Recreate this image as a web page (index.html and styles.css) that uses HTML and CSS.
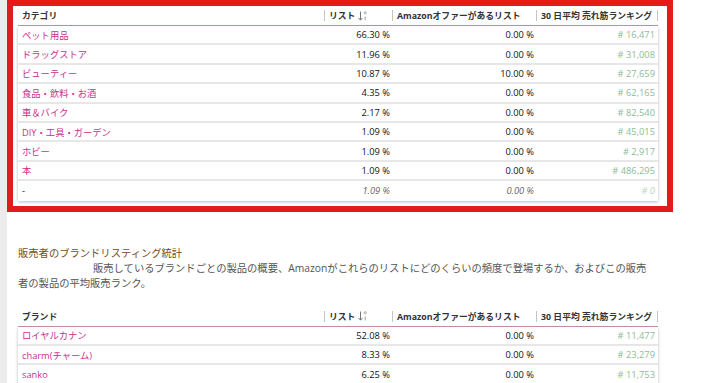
FILE: index.html
```html
<!DOCTYPE html>
<html lang="ja">
<head>
<meta charset="utf-8">
<title>カテゴリ統計</title>
<link rel="stylesheet" href="styles.css">
</head>
<body>
<div class="page">
  <div class="rail"></div>
  <main class="content">
    <div class="highlight">
      <div class="stats">
        <div class="head">
          <div class="th"><span class="label">カテゴリ</span><span class="grip"></span></div>
          <div class="th"><span class="label">リスト <svg class="sort" viewBox="0 0 9 10" width="9" height="10"><path d="M2.5 0.5V9M0.6 7l1.9 2.2L4.4 7" fill="none" stroke="#777" stroke-width="1"/><circle cx="7.2" cy="1.8" r="1.1" fill="none" stroke="#999" stroke-width="0.8"/><path d="M7.2 5.6V9.4" stroke="#999" stroke-width="0.9"/></svg></span><span class="grip"></span></div>
          <div class="th"><span class="label">Amazonオファーがあるリスト</span><span class="grip"></span></div>
          <div class="th"><span class="label">30 日平均 売れ筋ランキング</span><span class="grip"></span></div>
        </div>
        <div class="body">
          <div class="row"><div class="cell cat">ペット用品</div><div class="cell num">66.30 %</div><div class="cell num">0.00 %</div><div class="cell rank"># 16,471</div></div>
          <div class="row"><div class="cell cat">ドラッグストア</div><div class="cell num">11.96 %</div><div class="cell num">0.00 %</div><div class="cell rank"># 31,008</div></div>
          <div class="row"><div class="cell cat">ビューティー</div><div class="cell num">10.87 %</div><div class="cell num">10.00 %</div><div class="cell rank"># 27,659</div></div>
          <div class="row"><div class="cell cat">食品・飲料・お酒</div><div class="cell num">4.35 %</div><div class="cell num">0.00 %</div><div class="cell rank"># 62,165</div></div>
          <div class="row"><div class="cell cat">車＆バイク</div><div class="cell num">2.17 %</div><div class="cell num">0.00 %</div><div class="cell rank"># 82,540</div></div>
          <div class="row"><div class="cell cat">DIY・工具・ガーデン</div><div class="cell num">1.09 %</div><div class="cell num">0.00 %</div><div class="cell rank"># 45,015</div></div>
          <div class="row"><div class="cell cat">ホビー</div><div class="cell num">1.09 %</div><div class="cell num">0.00 %</div><div class="cell rank"># 2,917</div></div>
          <div class="row"><div class="cell cat">本</div><div class="cell num">1.09 %</div><div class="cell num">0.00 %</div><div class="cell rank"># 486,295</div></div>
          <div class="row total"><div class="cell plain">-</div><div class="cell num">1.09 %</div><div class="cell num">0.00 %</div><div class="cell rank"># 0</div></div>
        </div>
      </div>
    </div>

    <section class="brands">
      <h2 class="title">販売者のブランドリスティング統計</h2>
      <p class="desc">販売しているブランドごとの製品の概要、Amazonがこれらのリストにどのくらいの頻度で登場するか、およびこの販売者の製品の平均販売ランク。</p>
      <div class="stats">
        <div class="head">
          <div class="th"><span class="label">ブランド</span><span class="grip"></span></div>
          <div class="th"><span class="label">リスト <svg class="sort" viewBox="0 0 9 10" width="9" height="10"><path d="M2.5 0.5V9M0.6 7l1.9 2.2L4.4 7" fill="none" stroke="#777" stroke-width="1"/><circle cx="7.2" cy="1.8" r="1.1" fill="none" stroke="#999" stroke-width="0.8"/><path d="M7.2 5.6V9.4" stroke="#999" stroke-width="0.9"/></svg></span><span class="grip"></span></div>
          <div class="th"><span class="label">Amazonオファーがあるリスト</span><span class="grip"></span></div>
          <div class="th"><span class="label">30 日平均 売れ筋ランキング</span><span class="grip"></span></div>
        </div>
        <div class="body">
          <div class="row"><div class="cell cat">ロイヤルカナン</div><div class="cell num">52.08 %</div><div class="cell num">0.00 %</div><div class="cell rank"># 11,477</div></div>
          <div class="row"><div class="cell cat">charm(チャーム)</div><div class="cell num">8.33 %</div><div class="cell num">0.00 %</div><div class="cell rank"># 23,279</div></div>
          <div class="row"><div class="cell cat">sanko</div><div class="cell num">6.25 %</div><div class="cell num">0.00 %</div><div class="cell rank"># 11,753</div></div>
        </div>
      </div>
    </section>
  </main>
</div>
</body>
</html>
```

FILE: styles.css
```css
* { box-sizing: border-box; }

html, body {
  margin: 0;
  padding: 0;
  background: #ffffff;
}

body {
  font-family: "Open Sans", "Noto Sans CJK JP", sans-serif;
  font-size: 9.3px;
  color: #111;
  overflow: hidden;
}

.page {
  display: flex;
  width: 711px;
  height: 383px;
  overflow: hidden;
}

.rail {
  width: 7px;
  flex: none;
  background: #ececec;
}

.content {
  flex: 1;
  background: #fff;
}

.highlight {
  width: 666px;
  border: 6px solid #e21b1b;
  padding: 0 9px 5px 5px;
}

.stats {
  width: 640px;
}

.head {
  display: grid;
  grid-template-columns: 307px 68px 144px 121px;
  height: 20px;
  border-bottom: 1px solid #c993ad;
}

.th {
  display: flex;
  align-items: center;
  padding-left: 4px;
  font-weight: 700;
  font-size: 8.8px;
  color: #333;
}

.th .label {
  display: flex;
  align-items: center;
  white-space: nowrap;
}

.sort {
  margin-left: 3px;
}

.grip {
  margin-left: auto;
  width: 1px;
  height: 11px;
  background: #c4c4c4;
  flex: none;
}

.body {
  box-shadow: 0 1px 3px rgba(0, 0, 0, 0.28);
}

.row {
  display: grid;
  grid-template-columns: 307px 68px 144px 121px;
  height: 19.4px;
  align-items: center;
  border-bottom: 2px solid #e7e7e7;
  background: #fff;
}

.row:last-child {
  border-bottom: 0;
}

.cell {
  white-space: nowrap;
  padding: 0 3px 0 4px;
}

.cat {
  color: #c92f8d;
}

.plain {
  color: #111;
}

.num {
  text-align: right;
}

.rank {
  text-align: right;
  color: #8dbb98;
}

.total .num {
  font-style: italic;
  color: #666;
}

.total .rank {
  font-style: italic;
  color: #b7d6be;
}

.brands {
  padding: 34px 0 0 11px;
}

.title {
  margin: 0;
  font-size: 10.3px;
  font-weight: 400;
  line-height: 15px;
  color: #7a4a22;
}

.desc {
  margin: 0 0 16px;
  width: 632px;
  font-size: 10.3px;
  line-height: 15px;
  text-indent: 75px;
  color: #555;
}
```
